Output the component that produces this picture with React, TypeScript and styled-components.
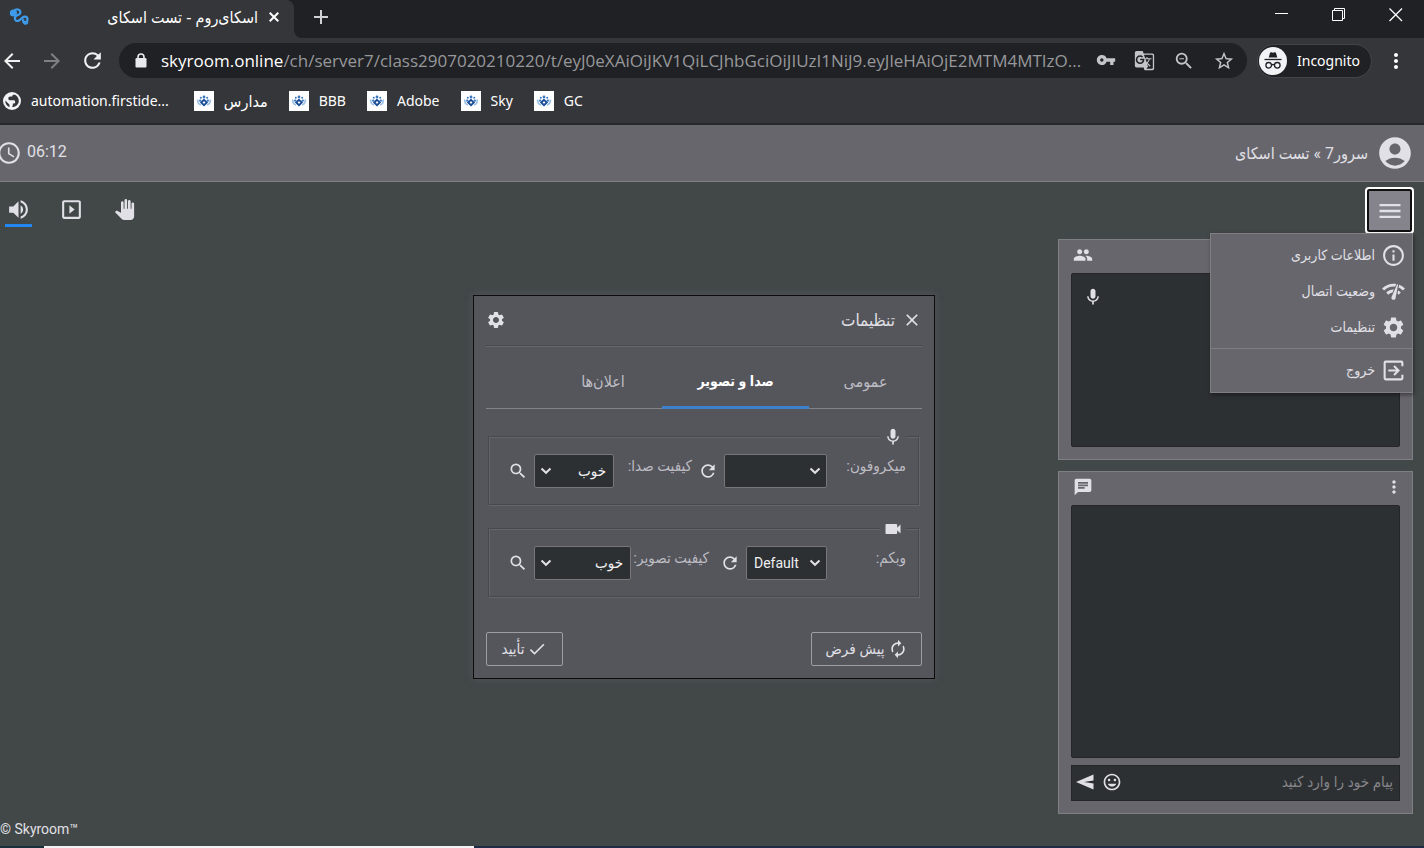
import React from 'react';
import styled, { createGlobalStyle, css } from 'styled-components';
import {
  MdAccessTime, MdAccountCircle, MdArrowBack, MdArrowForward, MdAutorenew, MdChat, MdCheck, MdClose,
  MdGTranslate, MdGroup, MdInfoOutline, MdInsertEmoticon, MdMenu, MdMic, MdMoreVert, MdNetworkCheck,
  MdPanTool, MdRefresh, MdSearch, MdSettings, MdSlideshow, MdStarBorder, MdVideocam,
  MdVolumeUp, MdVpnKey, MdZoomOut, MdAdd,
} from 'react-icons/md';

const c = {
  strip: '#202124',
  chrome: '#35363a',
  stage: '#424748',
  panel: '#68666d',
  modal: '#55555c',
  dark: '#2d3032',
  line: '#7e7e83',
  text: '#e0e0e6',
  muted: '#bcbcc2',
  blue: '#2287f0',
};

const uiFont = "'Noto Sans', 'Open Sans', 'DejaVu Sans Condensed', 'DejaVu Sans', sans-serif";
const roomFont = "Roboto, 'DejaVu Sans Condensed', 'DejaVu Sans', sans-serif";

const GlobalStyle = createGlobalStyle`
  *, *::before, *::after { box-sizing: border-box; }
  body { margin: 0; background: ${c.stage}; }
  button, input, select { font: inherit; color: inherit; margin: 0; }
  button { background: none; border: 0; padding: 0; cursor: pointer; }
  svg { display: block; flex: none; }
`;

const Page = styled.div`
  min-height: 100vh;
  display: flex;
  flex-direction: column;
  overflow: hidden;
`;

/* ---------- browser window ---------- */

const Browser = styled.header`
  font-family: ${uiFont};
  color: #fff;
  background: ${c.chrome};
  border-bottom: 2px solid #28282b;
`;

const TabStrip = styled.div`
  display: flex;
  height: 38px;
  background: linear-gradient(${c.strip} 50%, ${c.chrome} 50%);
`;

const BrowserTab = styled.div`
  width: 294px;
  display: flex;
  align-items: center;
  gap: 8px;
  padding: 0 12px 4px 8px;
  background: ${c.chrome};
  border-radius: 0 8px 0 0;
`;

const StripRest = styled.div`
  flex: 1;
  display: flex;
  background: ${c.strip};
  border-radius: 0 0 0 8px;
`;

const TabTitle = styled.span`
  flex: 1;
  font-size: 16px;
  line-height: 20px;
  white-space: nowrap;
`;

const TabClose = styled.button`
  display: grid;
  place-items: center;
  width: 16px;
  height: 16px;
`;

const StripButton = styled.button`
  display: grid;
  place-items: center;
  width: 54px;
  height: 34px;
  color: #d0d1d3;
`;

const WindowButtons = styled.div`
  display: flex;
  margin-left: auto;
  padding-bottom: 8px;
`;

const WindowButton = styled.button`
  display: grid;
  place-items: center;
  width: 57px;
  color: #fff;
`;

const Toolbar = styled.div`
  display: flex;
  align-items: center;
  height: 45px;
  padding-right: 16px;
`;

const NavButton = styled.button<{ $off?: boolean }>`
  display: grid;
  place-items: center;
  width: 40px;
  color: ${(p) => (p.$off ? '#7f8083' : '#f1f1f2')};
  &:first-child { width: 32px; padding-right: 8px; }
`;

const AddressBar = styled.div`
  flex: 1;
  min-width: 0;
  display: flex;
  align-items: center;
  height: 35px;
  margin-left: 7px;
  padding: 0 12px 0 16px;
  border-radius: 18px;
  background: ${c.strip};
`;

const Url = styled.div`
  flex: 1;
  min-width: 0;
  margin-left: 14px;
  overflow: hidden;
  white-space: nowrap;
  font-family: 'Open Sans', 'Noto Sans', sans-serif;
  font-size: 17px;
  line-height: 24px;
  color: #97989b;
  b { font-weight: 400; color: #fff; }
`;

const AddressIcons = styled.div`
  display: flex;
  gap: 18px;
  color: #c4c5c8;
`;

const Incognito = styled.button`
  display: flex;
  align-items: center;
  gap: 10px;
  height: 34px;
  margin-left: 10px;
  padding: 0 11px 0 1px;
  border: 1px solid #44454a;
  border-radius: 18px;
  background: ${c.strip};
  font-size: 14px;
`;

const ChromeMenu = styled.button`
  width: 24px;
  margin-left: 12px;
`;

const Bookmarks = styled.nav`
  display: flex;
  align-items: center;
  gap: 21px;
  height: 40px;
  padding: 0 0 5px 2px;
  font-size: 14px;
`;

const Bookmark = styled.a<{ $wide?: boolean; $rtl?: boolean }>`
  display: flex;
  align-items: center;
  gap: ${(p) => (p.$wide ? 9 : 10)}px;
  margin-right: ${(p) => (p.$wide ? 4 : 0)}px;
  font-size: ${(p) => (p.$rtl ? 16 : 14)}px;
  line-height: 20px;
  color: inherit;
  text-decoration: none;
`;

/* ---------- room ---------- */

const Room = styled.div`
  position: relative;
  flex: 1;
  display: flex;
  flex-direction: column;
  background: ${c.stage};
  font-family: ${roomFont};
  color: ${c.text};
`;

const RoomBar = styled.header`
  display: flex;
  align-items: center;
  justify-content: space-between;
  height: 57px;
  padding-right: 10px;
  background: ${c.panel};
  border-bottom: 1px solid ${c.line};
`;

const RoomUser = styled.div`
  display: flex;
  align-items: center;
  gap: 8px;
  font-size: 16px;
`;

const Clock = styled.div`
  display: flex;
  align-items: center;
  gap: 5px;
  margin-left: -4px;
  font-size: 16px;
  time { padding-bottom: 4px; }
`;

const ActionBar = styled.div`
  position: relative;
  display: flex;
  align-items: center;
  justify-content: space-between;
  height: 57px;
  padding: 0 10px 0 5px;
`;

const MenuButton = styled.button`
  display: grid;
  place-items: center;
  width: 49px;
  height: 47px;
  border: 2px solid #fff;
  border-radius: 4px;
  background: #85848c;
  box-shadow: inset 0 0 0 2px #101010;
`;

const Tools = styled.div`
  display: flex;
  flex-direction: row-reverse;
  gap: 26px;
`;

const Tool = styled.button<{ $on?: boolean }>`
  display: grid;
  place-items: center;
  width: 27px;
  height: 32px;
  border-bottom: 3px solid ${(p) => (p.$on ? c.blue : 'transparent')};
`;

const Menu = styled.ul`
  position: absolute;
  z-index: 2;
  top: 51px;
  right: 11px;
  width: 203px;
  margin: 0;
  padding: 3px 0 4px;
  list-style: none;
  background: ${c.panel};
  border: 1px solid ${c.line};
  box-shadow: 1px 2px 4px rgba(0, 0, 0, 0.4);
`;

const MenuRow = styled.li<{ $split?: boolean }>`
  ${(p) => p.$split && css`
    margin-top: 3px;
    padding-top: 3px;
    border-top: 1px solid ${c.line};
  `}
  button {
    display: flex;
    align-items: center;
    gap: 6px;
    width: 100%;
    height: 36px;
    padding: 0 6px;
    font-size: 14px;
  }
`;

const Stage = styled.main`
  flex: 1;
  display: flex;
  padding: 0 11px 32px 0;
`;

const Side = styled.aside`
  display: flex;
  flex-direction: column;
  gap: 11px;
  width: 355px;
`;

const Panel = styled.section<{ $grow?: boolean }>`
  display: flex;
  flex-direction: column;
  flex: ${(p) => (p.$grow ? '1' : '0 0 221px')};
  padding: 0 12px 12px;
  background: ${c.panel};
  border: 1px solid ${c.line};
`;

const PanelHead = styled.header`
  display: flex;
  align-items: center;
  justify-content: space-between;
  height: 33px;
  padding: 0 0 4px 2px;
`;

const MoreButton = styled.button`
  display: flex;
  justify-content: center;
  width: 12px;
`;

const Well = styled.div`
  flex: 1;
  display: flex;
  justify-content: flex-end;
  padding: 13px 11px;
  background: ${c.dark};
  border: 1px solid #232527;
  border-radius: 2px;
`;

const Composer = styled.form`
  display: flex;
  align-items: center;
  gap: 8px;
  height: 36px;
  margin-top: 7px;
  padding: 0 4px 2px;
  background: ${c.dark};
  border: 1px solid #232527;
  input {
    flex: 1;
    min-width: 0;
    padding: 0 2px;
    border: 0;
    outline: 0;
    background: transparent;
    font-size: 15px;
  }
  input::placeholder { color: #85858a; opacity: 1; }
`;

const Brand = styled.footer`
  position: absolute;
  left: 0;
  bottom: 8px;
  font-size: 14px;
  line-height: 18px;
`;

const TaskBar = styled.div`
  display: flex;
  height: 2px;
  background: #1d2b45;
  &::before { content: ''; width: 44px; background: #1a2f3c; }
  &::after { content: ''; width: 430px; background: #f2f2f2; }
`;

/* ---------- settings dialog ---------- */

const Overlay = styled.div`
  position: absolute;
  z-index: 1;
  inset: 0;
  display: flex;
  align-items: center;
  justify-content: center;
  padding: 2px 16px 0 0;
  pointer-events: none;
`;

const Dialog = styled.div`
  width: 462px;
  padding: 0 12px 12px;
  pointer-events: auto;
  background: ${c.modal};
  border: 1px solid #0c0c0d;
  box-shadow: 0 0 8px rgba(120, 124, 128, 0.35);
`;

const DialogHead = styled.header`
  display: flex;
  align-items: center;
  gap: 7px;
  height: 51px;
  padding-bottom: 2px;
  border-bottom: 1px solid #66666c;
  box-shadow: inset 0 -1px 0 #48484e;
  h2 { flex: 1; margin: 0; font-size: 17px; font-weight: 400; line-height: 24px; }
`;

const Tabs = styled.div`
  display: flex;
  height: 62px;
  border-bottom: 1px solid #828288;
`;

const Tab = styled.button<{ $w: number; $on?: boolean }>`
  width: ${(p) => p.$w}px;
  height: 62px;
  padding-top: 10px;
  font-size: ${(p) => (p.$on ? 14 : 16)}px;
  font-weight: ${(p) => (p.$on ? 700 : 400)};
  color: ${(p) => (p.$on ? '#fff' : c.muted)};
  border-bottom: 3px solid ${(p) => (p.$on ? '#3f80cc' : 'transparent')};
`;

const Group = styled.fieldset`
  min-width: 0;
  margin: 0 2px;
  padding: 7px 12px 16px;
  border: 2px groove rgba(128, 128, 134, 0.35);
  legend { padding: 0 3px; }
  & + & { margin-top: 13px; }
`;

const Groups = styled.div`
  padding: 18px 0 34px;
`;

const Fields = styled.div`
  display: flex;
  align-items: flex-start;
`;

const FieldLabel = styled.label<{ $grow?: boolean }>`
  ${(p) => (p.$grow ? 'flex: 1;' : 'width: 79px;')}
  line-height: 24px;
  font-size: 15px;
  white-space: nowrap;
  color: ${c.muted};
`;

const IconButton = styled.button`
  display: grid;
  place-items: center;
  width: 32px;
  height: 34px;
`;

const RefreshButton = styled(IconButton)<{ $gap?: number }>`
  margin-inline-end: ${(p) => p.$gap ?? 0}px;
`;

const SelectBox = styled.div<{ $w: number }>`
  position: relative;
  width: ${(p) => p.$w}px;
  height: 34px;
  select {
    width: 100%;
    height: 100%;
    appearance: none;
    padding: 0 7px;
    border: 1px solid #77777b;
    border-radius: 2px;
    background: ${c.dark};
    font-size: 14px;
    color: #f0f0f3;
  }
  select[dir='rtl'] { font-size: 15px; }
  svg {
    position: absolute;
    top: 13px;
    inset-inline-end: 6px;
    pointer-events: none;
  }
`;

const DialogFoot = styled.footer`
  display: flex;
  justify-content: space-between;
`;

const OutlineButton = styled.button<{ $w: number }>`
  display: flex;
  align-items: center;
  justify-content: center;
  gap: 3px;
  width: ${(p) => p.$w}px;
  height: 34px;
  font-size: 15px;
  border: 1px solid #9d9da3;
  border-radius: 2px;
`;

/* ---------- drawings ---------- */

const SkyLogo = () => (
  <svg width="22" height="20" viewBox="0 0 22 20" fill="none" stroke="#3d9bea">
    <circle cx="5.400" cy="6" r="2.600" fill="#3d9bea" strokeWidth="2" />
    <path d="M6 4C8 1.500 12.500 2 12.300 5.500c0 2-2.300 2.500-3.800 3.200C6 10 6.500 14 9.500 14c3.500 0 4-4.500 7.500-4.300 3.300.3 3.300 5 .3 5.300-1.800 0-2.300-1-2-2" strokeWidth="2.200" strokeLinecap="round" />
    <path d="M15 14c0 3 3.500 4 4.500 1.500" strokeWidth="1.800" strokeLinecap="round" />
  </svg>
);

const SchoolIcon = () => (
  <svg width="20" height="20" viewBox="0 0 20 20">
    <path fill="#fff" d="M0 0h20v20H0z" />
    <path d="m10 8.800 2.800 2.700-2.800 2.700-2.800-2.700z" fill="none" stroke="#1a4c96" strokeWidth="1.800" />
    <g fill="#3877bd">
      <circle cx="10" cy="6" r="1.400" /><circle cx="6.800" cy="6.800" r="1" /><circle cx="13.200" cy="6.800" r="1" />
      <circle cx="6.200" cy="9.600" r="1.200" /><circle cx="13.800" cy="9.600" r="1.200" />
    </g>
    <path d="M3.800 8.500c-.5 3 .5 4.500 3.200 5.500M16.200 8.500c.5 3-.5 4.500-3.200 5.500" fill="none" stroke="#9fc3e6" strokeWidth="1.800" />
  </svg>
);

const GlobeIcon = () => (
  <svg width="20" height="20" viewBox="0 0 20 20">
    <circle cx="10" cy="10" r="9" fill="#f1f3f4" />
    <path d="M12.500 3.500c-2 .3-2.200 1.200-2.300 2H8.300c-1.300 0-2 .9-2 2s.7 1.800 1.900 1.800h3.300c1 0 1.700.7 1.700 1.600 0 1-.7 1.600-1.600 1.600h-.8v1.800c0 .8-.5 1.400-1.200 1.700 4 .4 7.200-2.500 7.200-6 0-3-1.800-5.500-4.300-6.500zM3.300 9.500c-.2 3 1.400 5.600 4.200 6.700v-2c0-.8-.4-1.400-1.200-1.700z" fill="#35363a" />
  </svg>
);

const LockIcon = () => (
  <svg width="12" height="16" viewBox="0 0 12 16">
    <rect x="0.500" y="5" width="11" height="9.500" rx="1.200" fill="#e8eaed" />
    <path d="M3 5.500V4a3 3 0 0 1 6 0v1.500" fill="none" stroke="#e8eaed" strokeWidth="1.600" />
  </svg>
);

const SpyIcon = () => (
  <svg width="28" height="28" viewBox="0 0 28 28">
    <circle cx="14" cy="14" r="14" fill="#f1f3f4" />
    <path d="M9.700 10.500 11 6q.3-1 1.300-.7l1.700.5 1.700-.5q1-.3 1.300.7l1.300 4.500z" fill="#202124" />
    <g fill="none" stroke="#202124" strokeWidth="1.300">
      <path d="M5.500 12.500h17" />
      <circle cx="9.700" cy="18.300" r="2.800" /><circle cx="18.300" cy="18.300" r="2.800" /><path d="M12.500 18q1.500-1 3 0" />
    </g>
  </svg>
);

const ExitIcon = () => (
  <svg width="25" height="25" viewBox="0 0 24 24" fill="none" stroke="currentColor" strokeWidth="2">
    <path d="M20.500 8V4.500q0-1-1-1h-15q-1 0-1 1v15q0 1 1 1h15q1 0 1-1V16" />
    <path d="M7 12h9M12.500 7.700 16.800 12l-4.300 4.300" />
  </svg>
);

const SendIcon = () => (
  <svg width="18" height="16" viewBox="0 0 18 16" fill="currentColor">
    <path d="M0 8 17.500.5v6L8 8l9.500 1.500v6z" />
  </svg>
);

const Chevron = () => (
  <svg width="12" height="8" viewBox="0 0 12 8" fill="none" stroke="currentColor" strokeWidth="2">
    <path d="m1.500 1.500 4.500 4.300 4.500-4.300" />
  </svg>
);

type Drop = { id: string; label: string; width: number; dir: 'ltr' | 'rtl'; options: string[] };

const DropDown = ({ id, width, dir, options }: Drop) => (
  <SelectBox $w={width} dir={dir}>
    <select id={id} dir={dir}>
      {options.map((o) => <option key={o}>{o}</option>)}
    </select>
    <Chevron />
  </SelectBox>
);

type DeviceGroupProps = { icon: React.ReactNode; device: Drop; quality: Drop; gap?: number };

const DeviceGroup = ({ icon, device, quality, gap }: DeviceGroupProps) => (
  <Group>
    <legend>{icon}</legend>
    <Fields>
      <FieldLabel htmlFor={device.id}>{device.label}</FieldLabel>
      <DropDown {...device} />
      <RefreshButton type="button" aria-label="تازه‌سازی" $gap={gap}><MdRefresh size={20} /></RefreshButton>
      <FieldLabel $grow htmlFor={quality.id}>{quality.label}</FieldLabel>
      <DropDown {...quality} />
      <IconButton type="button" aria-label="آزمایش"><MdSearch size={20} /></IconButton>
    </Fields>
  </Group>
);

const links = [
  { name: 'مدارس', rtl: true },
  { name: 'BBB' },
  { name: 'Adobe' },
  { name: 'Sky' },
  { name: 'GC' },
];

export default function App() {
  return (
    <Page>
      <GlobalStyle />
      <Browser>
        <TabStrip>
          <BrowserTab>
            <SkyLogo />
            <TabTitle dir="rtl">اسکای‌روم - تست اسکای</TabTitle>
            <TabClose aria-label="Close tab">
              <svg width="10" height="10" stroke="currentColor" strokeWidth="2"><path d="m.7.7 8.600 8.600m0-8.600-8.600 8.600" /></svg>
            </TabClose>
          </BrowserTab>
          <StripRest>
            <StripButton aria-label="New tab"><MdAdd size={24} /></StripButton>
            <WindowButtons>
              <WindowButton aria-label="Minimize">
                <svg width="14" height="14" stroke="currentColor"><path d="M0 5.500h13" /></svg>
              </WindowButton>
              <WindowButton aria-label="Restore">
                <svg width="14" height="14" fill="none" stroke="currentColor"><path d="M.5 2.500h10v10H.5zM2.500 2V.5h10v10H11" /></svg>
              </WindowButton>
              <WindowButton aria-label="Close">
                <svg width="14" height="14" stroke="currentColor" strokeWidth="1.300"><path d="m.5.5 12.500 12.500m0-12.500L.5 13" /></svg>
              </WindowButton>
            </WindowButtons>
          </StripRest>
        </TabStrip>
        <Toolbar>
          <NavButton aria-label="Back"><MdArrowBack size={24} /></NavButton>
          <NavButton aria-label="Forward" $off><MdArrowForward size={24} /></NavButton>
          <NavButton aria-label="Reload"><MdRefresh size={25} /></NavButton>
          <AddressBar>
            <LockIcon />
            <Url><b>skyroom.online</b>/ch/server7/class2907020210220/t/eyJ0eXAiOiJKV1QiLCJhbGciOiJIUzI1NiJ9.eyJleHAiOjE2MTM4MTIzO...</Url>
            <AddressIcons>
              <MdVpnKey size={20} /><MdGTranslate size={21} /><MdZoomOut size={22} /><MdStarBorder size={22} />
            </AddressIcons>
          </AddressBar>
          <Incognito><SpyIcon />Incognito</Incognito>
          <ChromeMenu aria-label="Menu"><MdMoreVert size={24} /></ChromeMenu>
        </Toolbar>
        <Bookmarks>
          <Bookmark href="#" $wide><GlobeIcon />automation.firstide...</Bookmark>
          {links.map((l) => <Bookmark href="#" key={l.name} $rtl={l.rtl}><SchoolIcon />{l.name}</Bookmark>)}
        </Bookmarks>
      </Browser>

      <Room dir="rtl">
        <RoomBar>
          <RoomUser><MdAccountCircle size={38} />سرور7 » تست اسکای</RoomUser>
          <Clock dir="ltr"><MdAccessTime size={26} /><time>06:12</time></Clock>
        </RoomBar>
        <ActionBar>
          <MenuButton aria-label="منو"><MdMenu size={28} /></MenuButton>
          <Tools>
            <Tool $on aria-label="صدا"><MdVolumeUp size={25} /></Tool>
            <Tool aria-label="نمایش"><MdSlideshow size={25} /></Tool>
            <Tool aria-label="دست"><MdPanTool size={21} /></Tool>
          </Tools>
          <Menu>
            <MenuRow><button><MdInfoOutline size={25} />اطلاعات کاربری</button></MenuRow>
            <MenuRow><button><MdNetworkCheck size={25} />وضعیت اتصال</button></MenuRow>
            <MenuRow><button><MdSettings size={25} />تنظیمات</button></MenuRow>
            <MenuRow $split><button><ExitIcon />خروج</button></MenuRow>
          </Menu>
        </ActionBar>
        <Stage>
          <Side>
            <Panel>
              <PanelHead dir="ltr"><MdGroup size={20} /></PanelHead>
              <Well><MdMic size={20} /></Well>
            </Panel>
            <Panel $grow>
              <PanelHead dir="ltr">
                <MdChat size={20} />
                <MoreButton aria-label="بیشتر"><MdMoreVert size={20} /></MoreButton>
              </PanelHead>
              <Well />
              <Composer>
                <input aria-label="پیام" placeholder="پیام خود را وارد کنید" />
                <button type="button" aria-label="شکلک"><MdInsertEmoticon size={20} /></button>
                <button type="button" aria-label="ارسال"><SendIcon /></button>
              </Composer>
            </Panel>
          </Side>
        </Stage>
        <Brand dir="ltr">© Skyroom™</Brand>

        <Overlay dir="ltr">
          <Dialog role="dialog" aria-label="تنظیمات" dir="rtl">
            <DialogHead>
              <button aria-label="بستن"><MdClose size={20} /></button>
              <h2>تنظیمات</h2>
              <MdSettings size={20} />
            </DialogHead>
            <Tabs role="tablist">
              <Tab role="tab" $w={113}>عمومی</Tab>
              <Tab role="tab" $w={147} $on>صدا و تصویر</Tab>
              <Tab role="tab" $w={118}>اعلان‌ها</Tab>
            </Tabs>
            <Groups>
              <DeviceGroup
                icon={<MdMic size={20} />}
                device={{ id: 'mic', label: 'میکروفون:', width: 103, dir: 'ltr', options: [''] }}
                quality={{ id: 'mic-quality', label: 'کیفیت صدا:', width: 80, dir: 'rtl', options: ['خوب'] }}
              />
              <DeviceGroup
                icon={<MdVideocam size={20} />}
                device={{ id: 'cam', label: 'وبکم:', width: 81, dir: 'ltr', options: ['Default'] }}
                quality={{ id: 'cam-quality', label: 'کیفیت تصویر:', width: 97, dir: 'rtl', options: ['خوب'] }}
                gap={5}
              />
            </Groups>
            <DialogFoot>
              <OutlineButton $w={111}><MdAutorenew size={20} />پیش فرض</OutlineButton>
              <OutlineButton $w={77}><MdCheck size={20} />تأیید</OutlineButton>
            </DialogFoot>
          </Dialog>
        </Overlay>
      </Room>
      <TaskBar />
    </Page>
  );
}
